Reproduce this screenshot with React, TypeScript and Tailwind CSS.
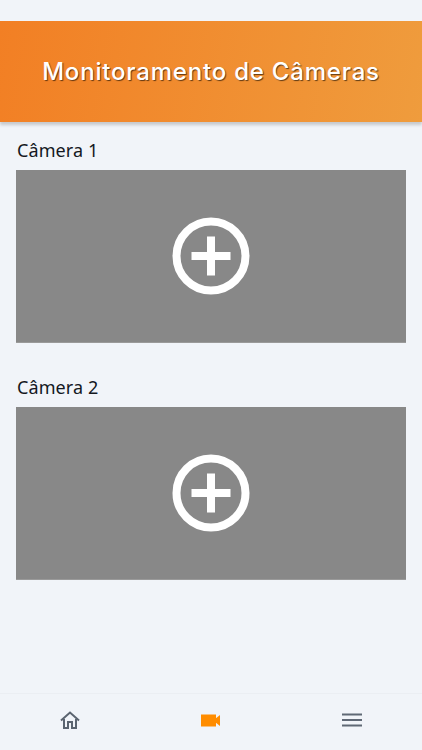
function CameraSlot({ label }: { label: string }) {
  return (
    <section>
      <h2 className="h-[32px] text-[18px] leading-[24px] tracking-[0.1px] pl-[1px] text-[#14181f] font-['Noto_Sans',sans-serif]">{label}</h2>
      <div className="h-[173px] flex items-center justify-center bg-[#888888] border-b border-[#9a9a9a]">
        <svg width="78" height="78" viewBox="0 0 78 78" fill="none" stroke="white">
          <circle cx="39" cy="39" r="34.5" strokeWidth="8" />
          <path d="M19.5 39H58.5M39 19.5V58.5" strokeWidth="8" />
        </svg>
      </div>
    </section>
  );
}

export default function App() {
  return (
    <div className="w-[422px] h-[750px] flex flex-col overflow-hidden bg-[#f1f4f9]">
      <header className="mt-[21px] h-[101px] shrink-0 flex items-center justify-center bg-[linear-gradient(100deg,#f27f24,#ef9c3d)] shadow-[0_3px_3px_rgba(0,0,0,0.18)]">
        <h1 className="text-[24px] font-medium tracking-[0.8px] text-white font-['Inter',sans-serif] [text-shadow:1px_1px_1px_rgba(0,0,0,0.6)]">
          Monitoramento de Câmeras
        </h1>
      </header>

      <main className="flex-1 flex flex-col gap-[32px] px-[16px] pt-[16px]">
        <CameraSlot label="Câmera 1" />
        <CameraSlot label="Câmera 2" />
      </main>

      <nav className="h-[57px] shrink-0 grid grid-cols-3 items-center justify-items-center pb-[4px] border-t border-[#ebeef3]">
        <svg width="20" height="18" viewBox="0 0 20 18" fill="none" stroke="#5b6470" strokeWidth="2">
          <path d="M1 9.5L10 1.5L19 9.5" />
          <path d="M4 8V17H8V11H12V17H16V8" />
        </svg>
        <svg width="19" height="13" viewBox="0 0 19 13" fill="#ff8c00">
          <rect x="0" y="0.5" width="15" height="12" />
          <path d="M14 5L19 1V12L14 8Z" />
        </svg>
        <svg width="20" height="14" viewBox="0 0 20 14" fill="#5f6875">
          <rect y="0.5" width="20" height="2" />
          <rect y="6" width="20" height="2" />
          <rect y="11.5" width="20" height="2" />
        </svg>
      </nav>
    </div>
  );
}
